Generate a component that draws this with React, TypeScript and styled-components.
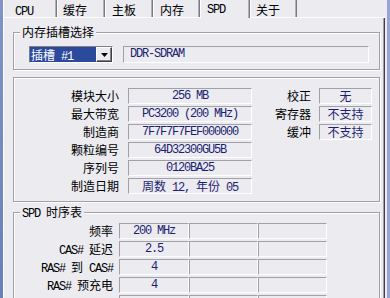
import React from 'react'
import styled, { createGlobalStyle } from 'styled-components'

const BG = '#ebebf0'
const NAVY = '#1e1e70'

const GlobalStyle = createGlobalStyle`
  html, body {
    margin: 0;
    padding: 0;
    background: ${BG};
  }
  body {
    font-family: "Noto Sans CJK SC", sans-serif;
    font-size: 12px;
    color: #000;
  }
`

const Screen = styled.div`
  display: flex;
  width: 390px;
  height: 298px;
  overflow: hidden;
  background: ${BG};
`

// window frame slivers at both sides of the crop
const LeftEdge = styled.div`
  width: 3px;
  flex-shrink: 0;
  background: linear-gradient(#8095c6, #6780bb);
`

const RightEdge = styled.div`
  width: 3px;
  flex-shrink: 0;
  border-left: 2px solid ${BG};
  background: #95a2dc;
`

const Window = styled.div`
  width: 382px;
  flex-shrink: 0;
  display: flex;
  flex-direction: column;
`

// tabs
const TabBar = styled.div`
  box-sizing: border-box;
  height: 18px;
  display: flex;
  align-items: flex-end;
  border-bottom: 1px solid #fff;
`

interface TabProps {
  $w: number
  $pad: number
  $active?: boolean
}

const Tab = styled.div<TabProps>`
  box-sizing: border-box;
  width: ${(p) => p.$w}px;
  height: ${(p) => (p.$active ? 18 : 17)}px;
  margin-bottom: ${(p) => (p.$active ? -1 : 0)}px;
  padding-left: ${(p) => p.$pad}px;
  padding-top: ${(p) => (p.$active ? 1 : 3)}px;
  border-left: 1px solid #fff;
  border-right: 1px solid #7a7a7e;
  box-shadow: inset -1px 0 0 #b0b0b6;
  background: ${BG};
  line-height: 14px;
  white-space: nowrap;
`

const Panel = styled.div`
  flex: 1;
  border-left: 1px solid #fff;
  border-right: 1px solid #404044;
  box-shadow: inset -1px 0 0 #a0a0a6;
  padding: 0 1px 0 9px;
`

// etched group box
interface GroupProps {
  $mt: number
  $pad: string
}

const Group = styled.div<GroupProps>`
  position: relative;
  margin: ${(p) => p.$mt}px 3px 0 0;
  padding: ${(p) => p.$pad};
  border: 1px solid #a0a0a6;
  box-shadow: inset 1px 1px 0 #fff, 1px 1px 0 #fff;
`

const GroupTitle = styled.div`
  position: absolute;
  top: -8px;
  left: 6px;
  padding: 0 2px;
  line-height: 14px;
  background: ${BG};
  white-space: nowrap;
`

const Mono = styled.span`
  font-family: "Liberation Mono", monospace;
  letter-spacing: -1.2px;
`

const Han = styled.span`
  font-family: "Noto Sans CJK SC", sans-serif;
  letter-spacing: 0;
`

// slot selector row
const SlotRow = styled.div`
  display: flex;
  gap: 10px;
`

const Combo = styled.div`
  box-sizing: border-box;
  width: 84px;
  height: 17px;
  display: flex;
  border: 1px solid;
  border-color: #808084 #fff #fff #808084;
`

const ComboText = styled.div`
  flex: 1;
  background: #2b4a9c;
  color: #fff;
  padding-left: 1px;
  line-height: 15px;
  white-space: nowrap;
`

const DropButton = styled.div`
  box-sizing: border-box;
  width: 16px;
  display: flex;
  align-items: center;
  justify-content: center;
  border: 1px solid;
  border-color: #fff #404044 #404044 #fff;
  box-shadow: inset -1px -1px 0 #808084;
  background: ${BG};
`

interface FieldProps {
  $left?: boolean
  $w?: number
}

const Field = styled.div<FieldProps>`
  box-sizing: border-box;
  height: 16px;
  ${(p) => (p.$w ? `width: ${p.$w}px;` : '')}
  text-align: ${(p) => (p.$left ? 'left' : 'center')};
  padding-left: ${(p) => (p.$left ? 6 : 0)}px;
  border: 1px solid;
  border-color: #a0a0a6 #fff #fff #a0a0a6;
  color: ${NAVY};
  font-family: "Liberation Mono", "Noto Sans CJK SC", monospace;
  letter-spacing: -1.2px;
  line-height: 14px;
  white-space: pre;
  overflow: hidden;
`

const WideField = styled(Field)`
  height: 17px;
  line-height: 15px;
`

// module info
const InfoRow = styled.div`
  display: flex;
`

const InfoGrid = styled.div<{ $cols: string; $gap: number }>`
  display: grid;
  grid-template-columns: ${(p) => p.$cols};
  grid-auto-rows: 16px;
  column-gap: ${(p) => p.$gap}px;
  row-gap: 2px;
`

const Label = styled.div<{ $pr?: number }>`
  text-align: right;
  padding-right: ${(p) => p.$pr ?? 0}px;
  line-height: 15px;
  white-space: nowrap;
`

const TimingGrid = styled.div`
  display: grid;
  grid-template-columns: 105px 70px 69px 69px;
  grid-auto-rows: 16px;
  row-gap: 2px;
`

const tabs = [
  { name: 'CPU', w: 54, pad: 11, mono: true },
  { name: '缓存', w: 48, pad: 5 },
  { name: '主板', w: 48, pad: 6 },
  { name: '内存', w: 47, pad: 6 },
  { name: 'SPD', w: 50, pad: 6, mono: true, active: true },
  { name: '关于', w: 47, pad: 5 },
]

const moduleInfo: [React.ReactNode, React.ReactNode][] = [
  ['模块大小', '256 MB'],
  ['最大带宽', 'PC3200 (200 MHz)'],
  ['制造商', '7F7F7F7FEF000000'],
  ['颗粒编号', '64D32300GU5B'],
  ['序列号', '0120BA25'],
  ['制造日期', <><Han>周数</Han>{' 12, '}<Han>年份</Han>{' 05'}</>],
]

const moduleFlags = [
  ['校正', '无'],
  ['寄存器', '不支持'],
  ['缓冲', '不支持'],
]

// the last row is cut by the bottom edge of the picture
const timings: [React.ReactNode, string][] = [
  ['频率', '200 MHz'],
  [<><Mono>CAS# </Mono>延迟</>, '2.5'],
  [<><Mono>RAS# </Mono>到<Mono> CAS#</Mono></>, '4'],
  [<><Mono>RAS# </Mono>预充电</>, '4'],
  ['', ''],
]

const TriangleIcon = () => (
  <svg width="7" height="4" viewBox="0 0 7 4">
    <path d="M0 0h7L3.5 4z" fill="#000" />
  </svg>
)

const App: React.FC = () => {
  return (
    <Screen>
      <GlobalStyle />
      <LeftEdge />
      <Window>
        <TabBar>
          {tabs.map((t) => (
            <Tab key={t.name} $w={t.w} $pad={t.pad} $active={t.active}>
              {t.mono ? <Mono>{t.name}</Mono> : t.name}
            </Tab>
          ))}
        </TabBar>
        <Panel>
          <Group $mt={14} $pad="13px 0 6px 15px">
            <GroupTitle>内存插槽选择</GroupTitle>
            <SlotRow>
              <Combo>
                <ComboText>
                  插槽<Mono> #1</Mono>
                </ComboText>
                <DropButton>
                  <TriangleIcon />
                </DropButton>
              </Combo>
              <WideField $left $w={246}>DDR-SDRAM</WideField>
            </SlotRow>
          </Group>

          <Group $mt={7} $pad="10px 0 7px 0">
            <InfoRow>
              <InfoGrid $cols="105px 124px" $gap={9}>
                {moduleInfo.map(([label, value], i) => (
                  <React.Fragment key={i}>
                    <Label>{label}</Label>
                    <Field>{value}</Field>
                  </React.Fragment>
                ))}
              </InfoGrid>
              <InfoGrid $cols="59px 53px" $gap={8}>
                {moduleFlags.map(([label, value]) => (
                  <React.Fragment key={label}>
                    <Label>{label}</Label>
                    <Field>
                      <Han>{value}</Han>
                    </Field>
                  </React.Fragment>
                ))}
              </InfoGrid>
            </InfoRow>
          </Group>

          <Group $mt={10} $pad="10px 0 8px 0">
            <GroupTitle>
              <Mono>SPD </Mono>时序表
            </GroupTitle>
            <TimingGrid>
              {timings.map(([label, value], i) => (
                <React.Fragment key={i}>
                  <Label $pr={6}>{label}</Label>
                  <Field>{value}</Field>
                  <Field />
                  <Field />
                </React.Fragment>
              ))}
            </TimingGrid>
          </Group>
        </Panel>
      </Window>
      <RightEdge />
    </Screen>
  )
}

export default App
